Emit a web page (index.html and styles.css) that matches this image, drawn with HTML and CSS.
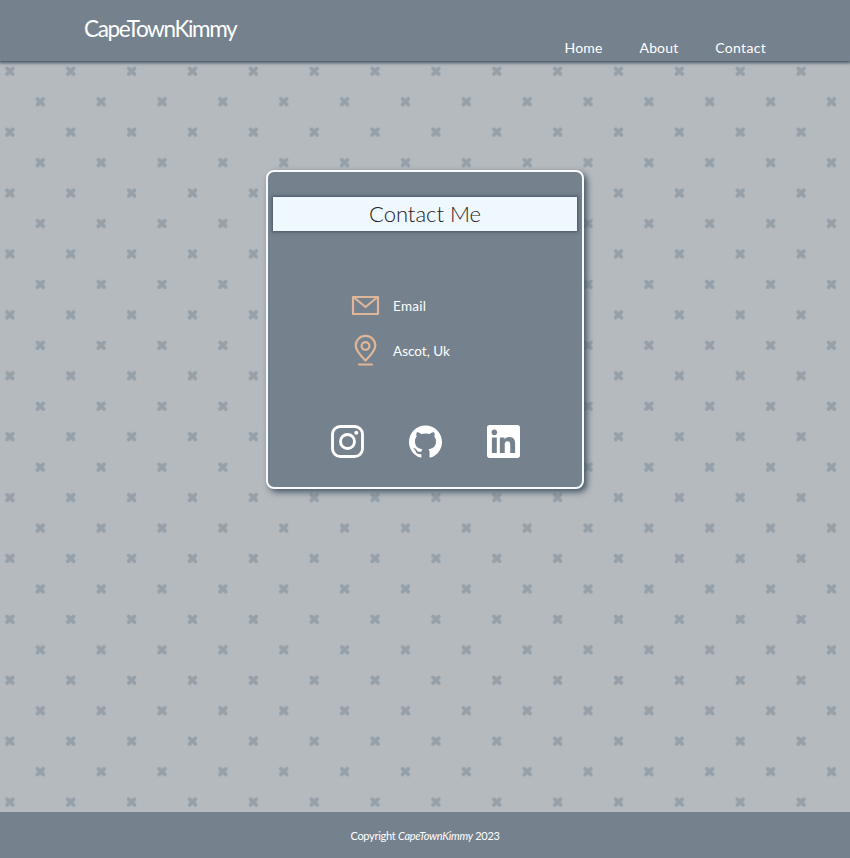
FILE: index.html
```html
<!DOCTYPE html>
<html lang="en">
<head>
<meta charset="utf-8">
<title>CapeTownKimmy - Contact</title>
<link rel="stylesheet" href="styles.css">
</head>
<body>
<header class="header">
  <a class="logo">CapeTownKimmy</a>
  <nav class="nav"><a class="home">Home</a><a class="about">About</a><a class="contact">Contact</a></nav>
</header>
<main class="main">
  <svg class="pattern" aria-hidden="true">
    <defs>
      <pattern id="crosses" width="60.86" height="60.9" patternUnits="userSpaceOnUse" patternTransform="translate(-20.5 -20)">
        <path d="M27.5 27.3l5.8 5.8m0-5.8l-5.8 5.8" class="cross"/>
      </pattern>
      <pattern id="crosses-offset" width="60.86" height="60.9" patternUnits="userSpaceOnUse" patternTransform="translate(9.9 10.5)">
        <path d="M27.5 27.3l5.8 5.8m0-5.8l-5.8 5.8" class="cross"/>
      </pattern>
    </defs>
    <rect width="100%" height="100%" fill="url(#crosses)"/>
    <rect width="100%" height="100%" fill="url(#crosses-offset)"/>
  </svg>
  <section class="card">
    <h1 class="title">Contact Me</h1>
    <div class="details">
      <div class="row">
        <svg class="icon" viewBox="0 0 30 34" fill="none" stroke="#dfb699" stroke-width="2.2" stroke-linejoin="round"><path d="M3 8h25v17H3zM4 8.500l11.500 9.500L27 8.500"/></svg>
        <span class="email">Email</span>
      </div>
      <div class="row">
        <svg class="icon" viewBox="0 0 30 34" fill="none" stroke="#dfb699" stroke-width="2.2" stroke-linecap="round"><path d="M15.500 26.500C12 23 5.700 17 5.700 11.500a9.800 9.600 0 0 1 19.600 0C25.300 17 19 23 15.500 26.500zM9 30.500h13"/><circle cx="15.500" cy="12" r="3.900"/></svg>
        <span class="place">Ascot, Uk</span>
      </div>
    </div>
    <div class="social">
      <svg viewBox="0 0 24 24" fill="none" stroke="#fff" stroke-width="2.100"><rect x="1.100" y="1.100" width="21.800" height="21.800" rx="5.700"/><circle cx="12" cy="12" r="5.100"/><circle cx="18.400" cy="5.600" r="1.450" fill="#fff" stroke="none"/></svg>
      <svg viewBox="0 0 24 24" fill="#fff"><path d="M12 .297c-6.630 0-12 5.373-12 12 0 5.303 3.438 9.800 8.205 11.385.6.113.82-.258.82-.577 0-.285-.01-1.040-.015-2.040-3.338.724-4.042-1.610-4.042-1.610C4.422 18.070 3.633 17.700 3.633 17.700c-1.087-.744.084-.729.084-.729 1.205.084 1.838 1.236 1.838 1.236 1.070 1.835 2.809 1.305 3.495.998.108-.776.417-1.305.76-1.605-2.665-.3-5.466-1.332-5.466-5.930 0-1.310.465-2.380 1.235-3.220-.135-.303-.54-1.523.105-3.176 0 0 1.005-.322 3.300 1.230.96-.267 1.980-.399 3-.405 1.020.006 2.040.138 3 .405 2.280-1.552 3.285-1.230 3.285-1.230.645 1.653.24 2.873.12 3.176.765.840 1.230 1.910 1.230 3.220 0 4.610-2.805 5.625-5.475 5.920.42.360.81 1.096.81 2.220 0 1.606-.015 2.896-.015 3.286 0 .315.21.690.825.570C20.565 22.092 24 17.592 24 12.297c0-6.627-5.373-12-12-12"/></svg>
      <svg viewBox="0 0 24 24" fill="#fff"><path d="M20.447 20.452h-3.554v-5.569c0-1.328-.027-3.037-1.852-3.037-1.853 0-2.136 1.445-2.136 2.939v5.667H9.351V9h3.414v1.561h.046c.477-.900 1.637-1.850 3.370-1.850 3.601 0 4.267 2.370 4.267 5.455v6.286zM5.337 7.433c-1.144 0-2.063-.926-2.063-2.065 0-1.138.920-2.063 2.063-2.063 1.140 0 2.064.925 2.064 2.063 0 1.139-.925 2.065-2.064 2.065zm1.782 13.019H3.555V9h3.564v11.452zM22.225 0H1.771C.792 0 0 .774 0 1.729v20.542C0 23.227.792 24 1.771 24h20.451C23.200 24 24 23.227 24 22.271V1.729C24 .774 23.200 0 22.222 0h.003z"/></svg>
    </div>
  </section>
</main>
<footer class="footer"><p>Copyright <em>CapeTownKimmy</em> 2023</p></footer>
</body>
</html>
```
FILE: styles.css
```css
* { box-sizing: border-box; }
body {
  margin: 0;
  height: 858px;
  display: flex;
  flex-direction: column;
  overflow: hidden;
  font-family: Lato, sans-serif;
  color: #fff;
  background: #b5babe;
}
.header {
  position: relative;
  z-index: 1;
  height: 61px;
  flex: none;
  display: flex;
  justify-content: space-between;
  padding: 0 84px;
  background: #75818d;
  box-shadow: 0 1px 3px 1px #465564;
}
.logo {
  margin-top: 14px;
  line-height: 30px;
  font-size: 22.5px;
  letter-spacing: -1.35px;
  white-space: nowrap;
}
.nav {
  display: flex;
  gap: 37px;
  margin-top: 38px;
  line-height: 20px;
  font-size: 14px;
  letter-spacing: 0.15px;
}
.contact { letter-spacing: 0.3px; }
.main {
  position: relative;
  flex: 1;
  padding-top: 109px;
}
.pattern {
  position: absolute;
  inset: 0;
  width: 100%;
  height: 100%;
}
.cross {
  fill: none;
  stroke: #96a0a8;
  stroke-width: 3.7;
  stroke-linecap: round;
}
.card {
  position: relative;
  width: 318px;
  height: 319px;
  margin: 0 auto;
  padding: 25px 5px 0;
  border: 2px solid #f8fbfd;
  border-radius: 8px;
  background: #75818d;
  box-shadow: 3px 3px 6px #465564;
}
.title {
  height: 34px;
  margin: 0;
  background: #f0f8ff;
  box-shadow: 0 0 3px 1px #465564;
  color: #1c2024;
  font-size: 22px;
  font-weight: 300;
  line-height: 34px;
  letter-spacing: 0;
  text-align: center;
}
.details {
  display: grid;
  gap: 11px;
  margin: 58px 0 0 77px;
  font-size: 13.5px;
  letter-spacing: 0.3px;
}
.row {
  display: flex;
  align-items: center;
  gap: 13px;
  height: 34px;
}
.place { letter-spacing: 0; }
.icon {
  width: 30px;
  height: 34px;
}
.social {
  display: flex;
  justify-content: space-between;
  width: 189px;
  margin: 57px auto 0;
}
.social svg {
  width: 33px;
  height: 33px;
}
.footer {
  position: relative;
  height: 46px;
  flex: none;
  background: #75818d;
  font-size: 11px;
  letter-spacing: -0.28px;
  text-align: center;
}
.footer p {
  margin: 0;
  padding-top: 14px;
  line-height: 20px;
}
```
